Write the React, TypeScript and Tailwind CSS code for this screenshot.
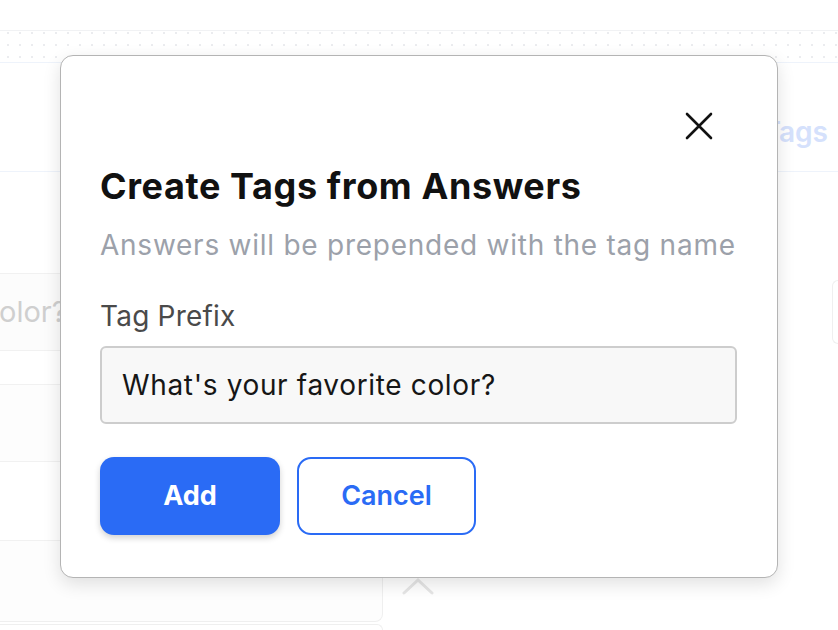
import React from 'react';

const font = { fontFamily: 'Inter, "Noto Sans", sans-serif' };

function CloseIcon() {
  return (
    <svg width="28" height="28" viewBox="0 0 28 28" fill="none" stroke="#111" strokeWidth="2.6" strokeLinecap="round">
      <path d="M2 2 L26 26 M26 2 L2 26" />
    </svg>
  );
}

function Backdrop() {
  return (
    <div className="flex flex-col h-full">
      <div className="h-[31px] border-b border-[#f1f2f4]" />
      <div className="h-[32px] border-b border-[#eef3fb] bg-[radial-gradient(#ebecef_1.2px,transparent_1.3px)] bg-[size:12px_12px] bg-[position:2px_-4px]" />
      <div className="h-[109px] border-b border-[#eef3fb] flex items-center justify-end pr-[10px] pt-[30px]">
        <span className="text-[28px] font-semibold text-[#d5e1fc]">Tags</span>
      </div>
      <div className="flex flex-1">
        <div className="w-[383px] flex flex-col pt-[101px]">
          <div className="h-[78px] border-y border-[#f1f1f1] bg-[#fcfcfc] flex items-center overflow-hidden">
            <span className="text-[29px] text-[#cfcfcf] -ml-[1px] whitespace-nowrap">olor?</span>
          </div>
          <div className="h-[34px] border-b border-[#f1f1f1]" />
          <div className="h-[77px] border-b border-[#f1f1f1] bg-[#fdfdfd]" />
          <div className="h-[79px] border-b border-[#f1f1f1]" />
          <div className="h-[81px] border-b border-r border-[#efefef] rounded-br-[8px] bg-[#fdfdfd]" />
          <div className="flex-1 border-t border-r border-[#efefef] rounded-tr-[8px] mt-[2px]" />
        </div>
        <div className="flex-1 flex flex-col">
          <div className="flex justify-end pt-[108px]">
            <div className="w-[6px] h-[64px] border border-r-0 border-[#efefef] rounded-l-[6px]" />
          </div>
          <div className="pl-[19px] pt-[233px]">
            <svg width="32" height="18" viewBox="0 0 32 18" fill="none" stroke="#e6e6e6" strokeWidth="3" strokeLinecap="round">
              <path d="M2 16 L16 3 L30 16" />
            </svg>
          </div>
        </div>
      </div>
    </div>
  );
}

export default function App() {
  return (
    <div className="relative w-[838px] h-[630px] overflow-hidden bg-white" style={font}>
      <Backdrop />
      <div className="absolute left-[60px] top-[55px] w-[718px] h-[523px] bg-white border-[1.5px] border-[#b4b4b4] rounded-[13px] shadow-[0_6px_18px_rgba(0,0,0,0.12)] pl-[39px] pr-[40px]">
        <div className="flex justify-end pt-[56px] pr-[24px]">
          <button className="w-[28px] h-[28px]">
            <CloseIcon />
          </button>
        </div>
        <h2 className="mt-[25px] text-[36px] leading-[42px] font-bold text-[#111] tracking-[0.6px] whitespace-nowrap">Create Tags from Answers</h2>
        <p className="mt-[20px] text-[28px] leading-[36px] text-[#9ca1aa] tracking-[0.75px] whitespace-nowrap">Answers will be prepended with the tag name</p>
        <label className="block mt-[35px] text-[28px] leading-[36px] text-[#4a4a4a] tracking-[0.2px]">Tag Prefix</label>
        <div className="mt-[12px] h-[78px] rounded-[6px] border-2 border-[#cdcdcd] bg-[#f8f8f8] flex items-center px-[20px]">
          <span className="text-[28px] text-[#161616] tracking-[0.65px]">What's your favorite color?</span>
        </div>
        <div className="mt-[33px] flex gap-[17px]">
          <button className="w-[180px] h-[78px] rounded-[14px] bg-[#2a6bf5] text-white text-[27px] font-bold shadow-[0_3px_6px_rgba(0,0,0,0.18)]">Add</button>
          <button className="w-[179px] h-[78px] rounded-[14px] border-2 border-[#2a6bf5] bg-white text-[#2a6bf5] text-[27px] font-semibold">Cancel</button>
        </div>
      </div>
    </div>
  );
}
